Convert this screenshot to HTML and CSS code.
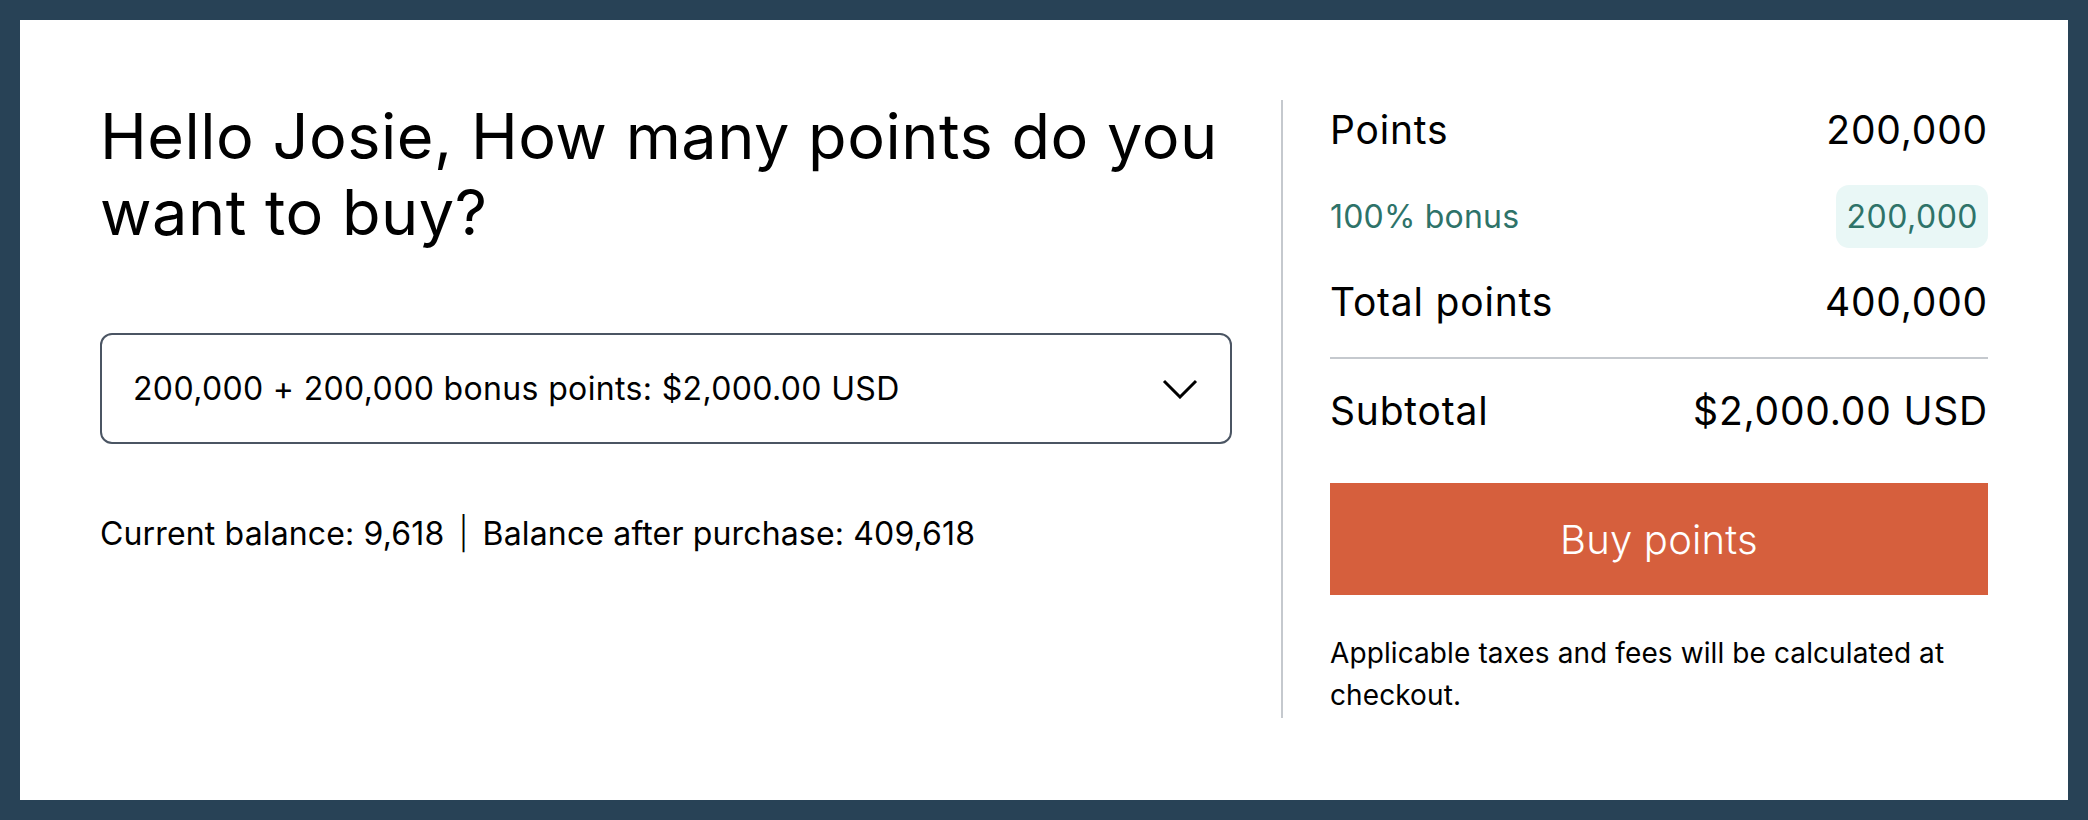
FILE: index.html
```html
<!DOCTYPE html>
<html lang="en">
<head>
<meta charset="utf-8">
<title>Buy points</title>
<link rel="stylesheet" href="styles.css">
</head>
<body>
  <main class="card">
    <section class="left">
      <h1 class="title">Hello Josie, How many points do you want to buy?</h1>
      <div class="select">
        <span class="select-value">200,000 + 200,000 bonus points: $2,000.00 USD</span>
        <svg class="chev" width="36" height="20" viewBox="0 0 36 20" aria-hidden="true"><path d="M2 2 L18 18 L34 2" fill="none" stroke="#000" stroke-width="3"/></svg>
      </div>
      <p class="balance">Current balance: 9,618<span class="sep">|</span>Balance after purchase: 409,618</p>
    </section>
    <aside class="summary">
      <div class="row row-main"><span>Points</span><span>200,000</span></div>
      <div class="row row-bonus"><span>100% bonus</span><span class="badge">200,000</span></div>
      <div class="row row-main row-total"><span>Total points</span><span>400,000</span></div>
      <div class="divider"></div>
      <div class="row row-main row-sub"><span>Subtotal</span><span>$2,000.00 USD</span></div>
      <button class="buy" type="button">Buy points</button>
      <p class="note">Applicable taxes and fees will be calculated at checkout.</p>
    </aside>
  </main>
</body>
</html>
```
FILE: styles.css
```css
html, body {
  margin: 0;
  height: 100%;
}
body {
  background: #284256;
  padding: 20px;
  box-sizing: border-box;
  font-family: Inter, "Noto Sans", sans-serif;
  color: #000;
}
.card {
  background: #fff;
  height: 780px;
  box-sizing: border-box;
  padding: 80px;
  display: grid;
  grid-template-columns: 1132px 1fr;
  column-gap: 49px;
  align-items: start;
}
.title {
  margin: -2px 0 0;
  font-size: 63px;
  line-height: 76px;
  font-weight: 400;
  letter-spacing: 0.5px;
}
.select {
  margin-top: 83px;
  height: 111px;
  box-sizing: border-box;
  border: 2px solid #4b5563;
  border-radius: 12px;
  display: flex;
  align-items: center;
  justify-content: space-between;
  padding: 0 32px 0 31px;
}
.select-value {
  font-size: 32px;
  letter-spacing: 0.35px;
}
.chev {
  display: block;
}
.balance {
  margin: 70px 0 0;
  font-size: 32px;
  line-height: 40px;
  letter-spacing: 0.15px;
}
.sep {
  margin: 0 14px;
  font-weight: 300;
}
.summary {
  border-left: 2px solid #c5c9ce;
  padding-left: 47px;
  padding-bottom: 2px;
}
.row {
  display: flex;
  justify-content: space-between;
  align-items: center;
}
.row-main {
  height: 58px;
  font-size: 39px;
  letter-spacing: 0.8px;
}
.row-bonus {
  margin-top: 27px;
  height: 63px;
  font-size: 32px;
  letter-spacing: 0.2px;
  color: #2e7369;
}
.badge {
  height: 63px;
  display: flex;
  align-items: center;
  padding: 0 10px;
  border-radius: 13px;
  background: #e9f7f6;
  letter-spacing: 0.5px;
}
.row-total {
  margin-top: 24px;
}
.divider {
  margin-top: 27px;
  height: 2px;
  background: #c5c9ce;
}
.row-sub {
  margin-top: 22px;
}
.buy {
  display: block;
  margin-top: 44px;
  width: 100%;
  height: 112px;
  border: none;
  background: #d65f3d;
  color: #fff;
  font-family: inherit;
  font-size: 40px;
  font-weight: 300;
  letter-spacing: 0.2px;
}
.note {
  margin: 37px 0 0;
  font-size: 28px;
  line-height: 42px;
  letter-spacing: 0.1px;
}
```
